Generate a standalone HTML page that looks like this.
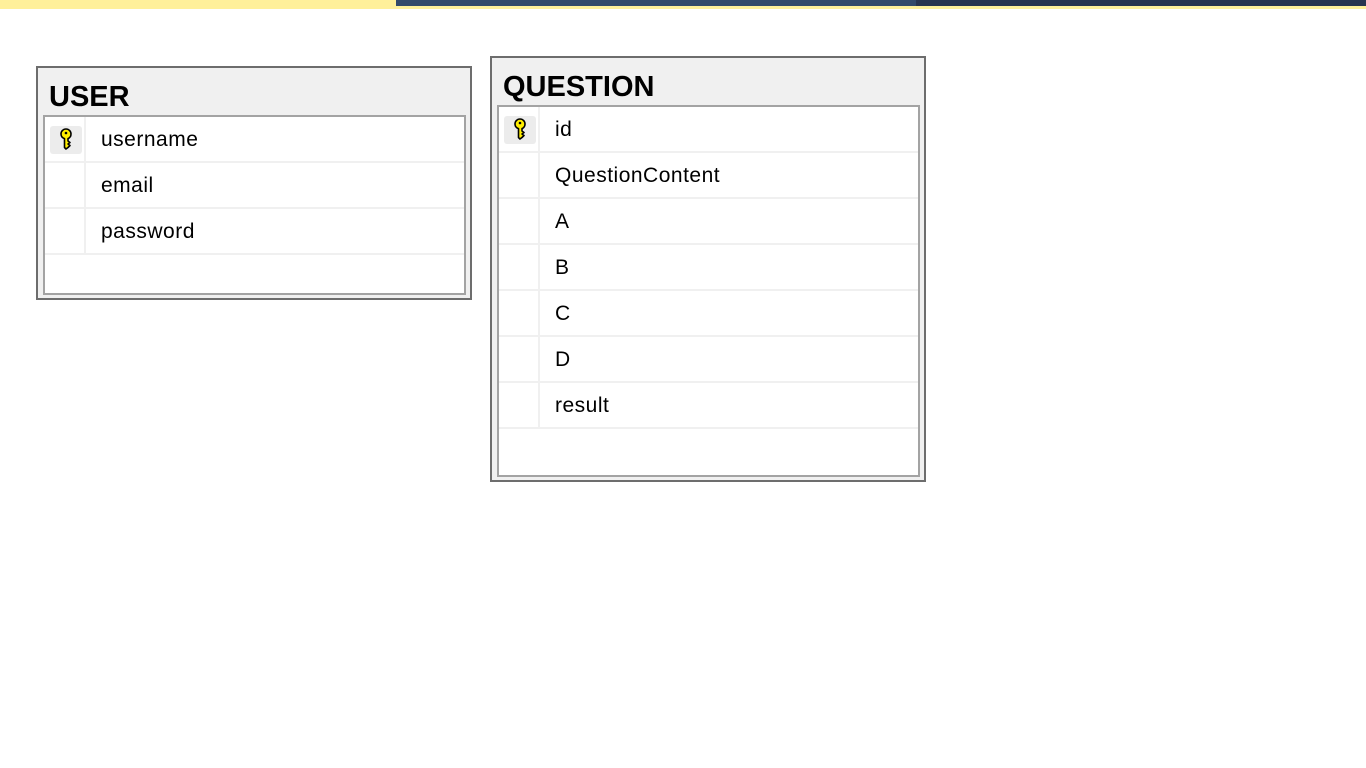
<!DOCTYPE html>
<html><head><meta charset="utf-8"><style>
*{margin:0;padding:0;box-sizing:border-box}
body{width:1366px;height:768px;background:#fff;position:relative;overflow:hidden;font-family:"Liberation Sans",sans-serif}
.bar{position:absolute;top:0;height:6px}
.tbl{position:absolute;border:2px solid #6d6d6d;background:#f0f0f0}
.ttl{position:absolute;left:11px;font-weight:bold;font-size:29px;color:#000}
.grid{position:absolute;left:5px;right:4px;border:2px solid #a3a3a3;background:#fff}
.row{height:46px;border-bottom:2px solid #f0f0f0;position:relative}
.row .k{position:absolute;left:0;top:0;width:41px;height:44px;border-right:2px solid #f0f0f0}
.row span{position:absolute;left:56px;top:11px;font-size:21px;color:#000;letter-spacing:0.5px}
.key{position:absolute;left:5px;top:9px;width:32px;height:28px;background:#ececec;border-radius:3px}
</style></head><body>
<div class="bar" style="left:0;width:1366px;height:9px;background:#fff09a"></div>
<div class="bar" style="left:396px;width:520px;background:#334a6b"></div>
<div class="bar" style="left:916px;width:450px;background:#283550"></div>

<div class="tbl" style="left:36px;top:66px;width:436px;height:234px">
 <div class="ttl" style="top:13px">USER</div>
 <div class="grid" style="top:47px;height:180px">
  <div class="row"><div class="k"><div class="key"><svg width="32" height="28" viewBox="0 0 32 28"><path d="M11 8a5 5 0 0 1 10 0a5 5 0 0 1-3 4.6V15l2 1.5-2 1.5 2 1.5-2 2-2 1.5-1.5-1.5V12.6A5 5 0 0 1 11 8z" fill="#ffee00" stroke="#000" stroke-width="1.6" stroke-linejoin="round"/><circle cx="16" cy="7" r="1.3" fill="#000"/></svg></div></div><span>username</span></div>
  <div class="row"><div class="k"></div><span>email</span></div>
  <div class="row"><div class="k"></div><span>password</span></div>
 </div>
</div>

<div class="tbl" style="left:490px;top:56px;width:436px;height:426px">
 <div class="ttl" style="top:13px">QUESTION</div>
 <div class="grid" style="top:47px;height:372px">
  <div class="row"><div class="k"><div class="key"><svg width="32" height="28" viewBox="0 0 32 28"><path d="M11 8a5 5 0 0 1 10 0a5 5 0 0 1-3 4.6V15l2 1.5-2 1.5 2 1.5-2 2-2 1.5-1.5-1.5V12.6A5 5 0 0 1 11 8z" fill="#ffee00" stroke="#000" stroke-width="1.6" stroke-linejoin="round"/><circle cx="16" cy="7" r="1.3" fill="#000"/></svg></div></div><span>id</span></div>
  <div class="row"><div class="k"></div><span>QuestionContent</span></div>
  <div class="row"><div class="k"></div><span>A</span></div>
  <div class="row"><div class="k"></div><span>B</span></div>
  <div class="row"><div class="k"></div><span>C</span></div>
  <div class="row"><div class="k"></div><span>D</span></div>
  <div class="row"><div class="k"></div><span>result</span></div>
 </div>
</div>
</body></html>
